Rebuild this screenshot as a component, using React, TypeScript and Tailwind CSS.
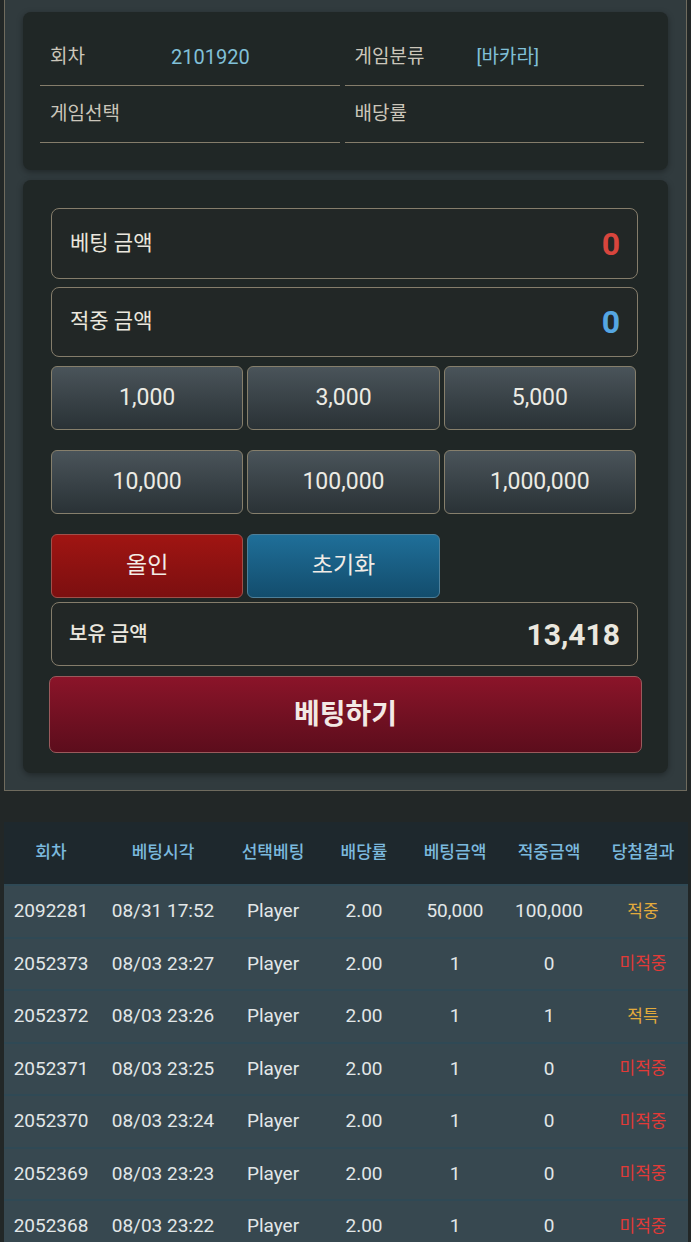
import React from "react";

const FONT = { fontFamily: "Roboto, 'Noto Sans CJK KR', 'Noto Sans', sans-serif" };

const rows = [
  ["2092281", "08/31 17:52", "Player", "2.00", "50,000", "100,000", "적중"],
  ["2052373", "08/03 23:27", "Player", "2.00", "1", "0", "미적중"],
  ["2052372", "08/03 23:26", "Player", "2.00", "1", "1", "적특"],
  ["2052371", "08/03 23:25", "Player", "2.00", "1", "0", "미적중"],
  ["2052370", "08/03 23:24", "Player", "2.00", "1", "0", "미적중"],
  ["2052369", "08/03 23:23", "Player", "2.00", "1", "0", "미적중"],
  ["2052368", "08/03 23:22", "Player", "2.00", "1", "0", "미적중"],
];

const headers = ["회차", "베팅시각", "선택베팅", "배당률", "베팅금액", "적중금액", "당첨결과"];
const widths = ["w-[94px]", "w-[130px]", "w-[90px]", "w-[92px]", "w-[90px]", "w-[98px]", "w-[90px]"];

function Chip({ label }: { label: string }) {
  return (
    <button className="h-[64px] rounded-[6px] border border-[#867f6c] bg-gradient-to-b from-[#4a545a] to-[#2a3236] text-[23px] text-[#ecebe4]">
      {label}
    </button>
  );
}

export default function App() {
  return (
    <div className="min-h-[1242px] w-[691px] bg-[#222727] overflow-hidden" style={FONT}>
      <div className="ml-[4px] w-[683px] border-l border-r border-b border-[#6f6b5e] bg-[#313b3e] px-[18px] pt-[12px] pb-[17px]">
        {/* Info card */}
        <div className="rounded-[8px] bg-[#202726] pl-[17px] pr-[24px] pt-[17px] pb-[27px] shadow-[0_2px_6px_rgba(0,0,0,0.35)]">
          <div className="grid grid-cols-2 gap-x-[5px]">
            <div className="flex h-[57px] items-center border-b border-[#857d6b] pl-[10px] text-[19px]">
              <span className="w-[121px] text-[#cbc6ba]">회차</span>
              <span className="text-[20px] text-[#80c0d8]">2101920</span>
            </div>
            <div className="flex h-[57px] items-center border-b border-[#857d6b] pl-[10px] text-[19px]">
              <span className="w-[122px] text-[#cbc6ba]">게임분류</span>
              <span className="text-[#80c0d8]">[바카라]</span>
            </div>
            <div className="flex h-[57px] items-center border-b border-[#857d6b] pl-[10px] text-[19px]">
              <span className="text-[#cbc6ba]">게임선택</span>
            </div>
            <div className="flex h-[57px] items-center border-b border-[#857d6b] pl-[10px] text-[19px]">
              <span className="text-[#cbc6ba]">배당률</span>
            </div>
          </div>
        </div>

        {/* Betting card */}
        <div className="mt-[10px] rounded-[8px] bg-[#202726] pl-[28px] pr-[30px] pt-[28px] pb-[20px] shadow-[0_2px_6px_rgba(0,0,0,0.35)]">
          <div className="flex h-[71px] items-center justify-between rounded-[8px] border border-[#857d6b] bg-[#222726] pl-[18px] pr-[17px]">
            <span className="text-[21px] text-[#ebe7de]">베팅 금액</span>
            <span className="text-[32px] font-bold text-[#d8453d]">0</span>
          </div>
          <div className="mt-[8px] flex h-[70px] items-center justify-between rounded-[8px] border border-[#857d6b] bg-[#222726] pl-[18px] pr-[17px]">
            <span className="text-[21px] text-[#ebe7de]">적중 금액</span>
            <span className="text-[32px] font-bold text-[#55a6e2]">0</span>
          </div>

          <div className="mt-[9px] grid w-[585px] grid-cols-3 gap-x-[4px] gap-y-[20px]">
            <Chip label="1,000" />
            <Chip label="3,000" />
            <Chip label="5,000" />
            <Chip label="10,000" />
            <Chip label="100,000" />
            <Chip label="1,000,000" />
            <button className="h-[64px] rounded-[6px] border border-[#a0504a] bg-gradient-to-b from-[#a01512] to-[#7c0f10] text-[23px] text-[#f2ece6]">
              올인
            </button>
            <button className="h-[64px] rounded-[6px] border border-[#4e7f99] bg-gradient-to-b from-[#1f6f99] to-[#134d6d] text-[23px] text-[#f2ece6]">
              초기화
            </button>
          </div>

          <div className="mt-[4px] flex h-[64px] items-center justify-between rounded-[8px] border border-[#857d6b] bg-[#222726] pl-[17px] pr-[17px]">
            <span className="text-[20px] font-medium text-[#ebe7de]">보유 금액</span>
            <span className="text-[30px] font-bold text-[#ebe7de]">13,418</span>
          </div>

          <button className="-ml-[2px] mt-[10px] flex h-[77px] w-[593px] items-center justify-center rounded-[7px] border border-[#9a5a5c] bg-gradient-to-b from-[#8b1429] to-[#5c0d1c] text-[28px] font-bold text-[#f3e9e4]">
            베팅하기
          </button>
        </div>
      </div>

      {/* Table */}
      <div className="ml-[4px] mt-[31px] w-[684px]">
        <div className="flex h-[62px] items-center bg-[#1e282d]">
          {headers.map((h, i) => (
            <div key={h} className={`${widths[i]} text-center text-[17px] font-medium text-[#7bb9de]`}>
              {h}
            </div>
          ))}
        </div>
        {rows.map((r, ri) => (
          <div key={ri} className="flex h-[52.5px] items-center border-t-2 border-[#2f4955] bg-[#374850] first:border-t-0">
            {r.map((c, i) => {
              let color = "text-[#e2e7e8]";
              if (i === 6) color = c === "미적중" ? "text-[#e23a37]" : "text-[#e3ab3c]";
              const size = i === 6 ? "text-[17px]" : "text-[19px]";
              return (
                <div key={i} className={`${widths[i]} text-center ${size} ${color}`}>
                  {c}
                </div>
              );
            })}
          </div>
        ))}
      </div>
    </div>
  );
}
